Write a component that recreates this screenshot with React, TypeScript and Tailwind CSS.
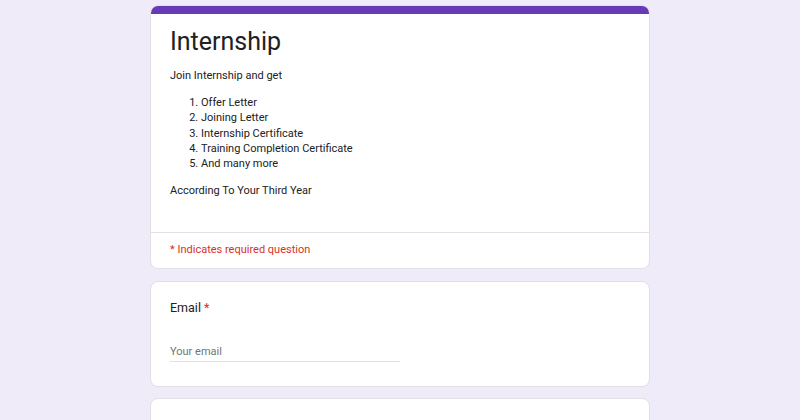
export default function App() {
  const perks = [
    "Offer Letter",
    "Joining Letter",
    "Internship Certificate",
    "Training Completion Certificate",
    "And many more",
  ];

  return (
    <main className="min-h-screen bg-[#f0ebf8] pt-[5px] font-['Roboto',sans-serif] text-[#202124]">
      <div className="mx-auto flex w-[500px] flex-col gap-3">
        {/* header card */}
        <div className="overflow-hidden rounded-lg border border-[#e2dfe8] bg-white">
          <div className="h-2 bg-[#673ab7]" />
          <div className="px-[19px] pt-3 pb-[34px]">
            <h1 className="text-[25px] leading-8">Internship</h1>
            <p className="mt-[10px] text-[11px] leading-[15px]">Join Internship and get</p>
            <ol className="mt-3 list-decimal pl-[31px] text-[11px] leading-[15.3px]">
              {perks.map((p) => (
                <li key={p}>{p}</li>
              ))}
            </ol>
            <p className="mt-3 text-[11px] leading-[15px]">According To Your Third Year</p>
          </div>
          <div className="border-t border-[#e2dfe8] px-[19px] pt-[9px] pb-[11px] text-[11px] leading-[15px] text-[#d93025]">
            * Indicates required question
          </div>
        </div>

        {/* email question */}
        <div className="rounded-lg border border-[#e2dfe8] bg-white px-[19px] pt-[16px] pb-[24px]">
          <div className="text-[12.5px] leading-5">
            Email <span className="text-[#d93025]">*</span>
          </div>
          <div className="mt-[26px] w-[230px] border-b border-[#e0e0e0] pb-[2px] text-[11px] leading-[15px] text-[#70757a]">
            Your email
          </div>
        </div>

        {/* next question */}
        <div className="-mt-px h-[60px] rounded-lg border border-[#e2dfe8] bg-white" />
      </div>
    </main>
  );
}
